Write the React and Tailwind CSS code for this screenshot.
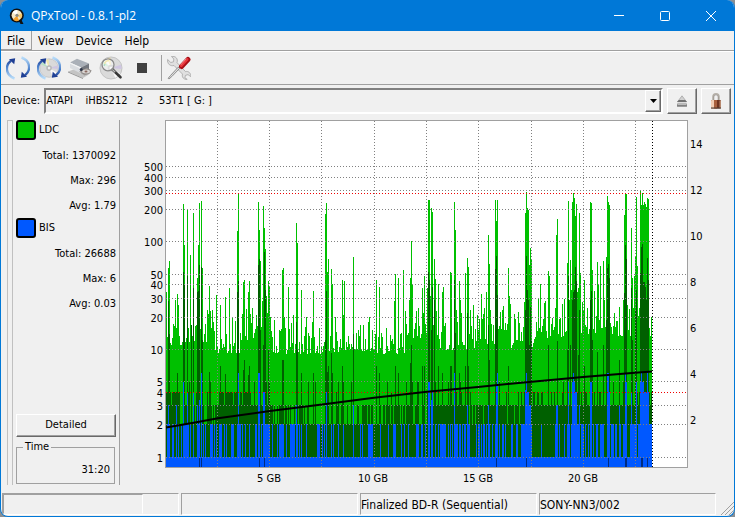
import React, { useState } from "react";

const UI_FONT = "font-['DejaVu_Sans_Condensed','Noto_Sans',sans-serif]";

// Chart geometry, in view box units
const LEFT = 166;
const RIGHT = 687;
const TOP = 121;
const BOTTOM = 467;
const DATA_END = 652;

const errorTicks = [
  [500, 166],
  [400, 177],
  [300, 190],
  [200, 209],
  [100, 241],
  [50, 274],
  [40, 284],
  [30, 298],
  [20, 317],
  [10, 349],
  [5, 381],
  [4, 392],
  [3, 405],
  [2, 424],
  [1, 457],
];

const speedTicks = [
  [14, 144],
  [12, 190],
  [10, 236],
  [8, 282],
  [6, 328],
  [4, 374],
  [2, 420],
];

const sizeTicks = [
  ["5 GB", 269],
  ["10 GB", 373],
  ["15 GB", 478],
  ["20 GB", 583],
];

const sizeGrid = [217, 269, 321, 374, 426, 478, 531, 583, 635];

// Peaks, keyed by column
const ldcPeaks = {
  166: 292, 167: 337, 168: 268, 169: 261, 175: 300, 177: 294, 178: 305,
  183: 204, 184: 245, 187: 210, 190: 255, 193: 213, 197: 278, 198: 245,
  199: 203, 201: 201, 202: 268, 208: 314, 209: 286, 212: 310, 216: 295,
  220: 305, 225: 297, 229: 288, 232: 318, 237: 231, 238: 193, 243: 282,
  244: 280, 248: 292, 249: 281, 252: 308, 258: 202, 259: 230, 260: 261,
  263: 206, 264: 228, 265: 249, 266: 296, 267: 313, 268: 281, 269: 286,
  270: 317, 282: 270, 283: 268, 284: 317, 288: 287, 293: 315, 296: 223,
  297: 243, 301: 290, 306: 317, 312: 322, 313: 291, 325: 214, 326: 203,
  327: 272, 328: 259, 331: 269, 332: 284, 335: 317, 342: 280, 343: 315,
  344: 281, 353: 257, 360: 325, 368: 322, 369: 317, 376: 280, 379: 287,
  386: 328, 395: 274, 394: 301, 398: 278, 403: 270, 409: 300, 410: 278,
  411: 241, 412: 284, 418: 308, 422: 288, 424: 276, 427: 288, 428: 200,
  429: 200, 430: 296, 431: 208, 432: 212, 434: 259, 435: 279, 438: 284,
  442: 292, 443: 287, 450: 272, 451: 273, 454: 202, 455: 230, 459: 281,
  460: 300, 465: 273, 467: 258, 468: 267, 473: 305, 481: 294, 486: 292,
  488: 235, 489: 264, 490: 310, 495: 200, 496: 221, 497: 200, 500: 312,
  502: 310, 508: 268, 509: 296, 510: 304, 514: 314, 518: 312, 524: 302,
  525: 213, 526: 192, 527: 208, 528: 210, 529: 265, 530: 248, 531: 259,
  540: 284, 544: 303, 545: 301, 548: 271, 549: 276, 552: 318, 556: 235,
  557: 219, 567: 263, 568: 201, 569: 300, 570: 260, 571: 290, 572: 202,
  573: 193, 574: 198, 575: 216, 576: 204, 577: 292, 578: 288, 579: 213,
  580: 273, 584: 280, 587: 308, 590: 202, 591: 203, 592: 270, 594: 291,
  597: 262, 598: 284, 600: 266, 603: 261, 604: 300, 606: 257, 607: 196,
  608: 202, 609: 205, 619: 307, 624: 215, 625: 193, 626: 194, 631: 228,
  632: 278, 634: 276, 635: 256, 636: 197, 637: 266, 640: 190, 641: 205,
  642: 193, 643: 205, 644: 202, 645: 204, 646: 207, 647: 198, 648: 199,
};

const ldcAverages = {
  168: 301, 169: 334, 177: 373, 183: 272, 184: 285, 187: 276, 191: 325,
  193: 288, 197: 292, 198: 291, 199: 265, 201: 267, 202: 340, 209: 372,
  220: 366, 225: 374, 237: 292, 238: 281, 243: 370, 244: 360, 248: 375,
  249: 366, 258: 265, 259: 259, 260: 330, 263: 345, 264: 252, 265: 290,
  268: 349, 282: 360, 283: 360, 296: 322, 297: 350, 301: 373, 313: 373,
  325: 340, 326: 291, 327: 372, 328: 366, 331: 353, 332: 373, 342: 366,
  353: 334, 376: 366, 379: 373, 395: 366, 398: 373, 410: 363, 411: 345,
  412: 381, 422: 366, 424: 366, 428: 272, 429: 280, 431: 330, 432: 287,
  434: 300, 438: 366, 442: 373, 450: 366, 451: 366, 454: 280, 455: 333,
  459: 373, 465: 366, 467: 313, 468: 366, 488: 325, 489: 360, 495: 269,
  496: 256, 497: 295, 508: 366, 525: 310, 526: 256, 527: 290, 528: 300,
  529: 345, 530: 307, 531: 340, 548: 345, 557: 341, 567: 350, 568: 276,
  570: 345, 572: 300, 573: 292, 574: 290, 575: 267, 576: 281, 578: 355,
  579: 310, 584: 366, 590: 300, 591: 291, 592: 340, 597: 352, 603: 345,
  606: 320, 607: 268, 608: 264, 609: 278, 619: 360, 624: 293, 625: 245,
  626: 259, 631: 288, 632: 340, 635: 310, 636: 290, 640: 273, 641: 247,
  642: 244, 643: 282, 644: 282, 645: 287, 646: 300, 647: 258, 648: 280,
};

const bisPeaks = {
  168: 405, 176: 405, 183: 382, 187: 392, 193: 392, 197: 405, 199: 400,
  201: 373, 238: 373, 258: 373, 259: 373, 263: 392, 264: 392, 296: 405,
  326: 392, 353: 405, 428: 382, 429: 382, 431: 400, 432: 392, 454: 373,
  467: 405, 488: 405, 496: 385, 497: 373, 525: 390, 526: 373, 527: 392,
  528: 392, 529: 405, 530: 405, 556: 405, 557: 405, 568: 382, 572: 382,
  573: 373, 574: 382, 575: 392, 576: 392, 579: 405, 590: 382, 591: 382,
  607: 373, 608: 373, 609: 392, 619: 405, 625: 373, 626: 382, 631: 392,
  636: 382, 640: 382, 641: 373, 642: 382, 643: 382, 644: 392, 645: 392,
  646: 392, 647: 373, 648: 392,
};

const bisAverages = [199, 201, 259, 264, 496, 526, 608, 625, 626, 641, 642, 647];

// start column, quiet level, swing
const ldcFloor = [
  [166, 345, 38],
  [182, 342, 40],
  [211, 353, 42],
  [240, 340, 40],
  [272, 354, 34],
  [298, 354, 28],
  [340, 351, 28],
  [372, 354, 26],
  [405, 338, 28],
  [438, 350, 44],
  [475, 344, 36],
  [496, 330, 28],
  [508, 348, 32],
  [535, 338, 40],
  [575, 334, 34],
  [612, 336, 36],
  [649, 336, 20],
];

// start column, share of columns at 3, share of columns at 4
const ldcAverageFloor = [
  [166, 1, 0.95],
  [179, 0.6, 0.15],
  [219, 1, 0.95],
  [251, 1, 0.1],
  [272, 0.45, 0.08],
  [340, 0.5, 0],
  [380, 0.6, 0.1],
  [427, 0.85, 0.15],
  [520, 0.95, 0.4],
  [536, 1, 0.2],
  [570, 1, 0.5],
  [600, 1, 0.3],
  [636, 1, 0.9],
];

// start column, share of columns at 2
const bisFloor = [
  [166, 0.45],
  [258, 0.7],
  [270, 0.3],
  [428, 0.5],
  [521, 1],
  [532, 0.3],
  [567, 0.9],
  [585, 0.45],
  [606, 0.6],
  [639, 1],
];

const noise = (n) => {
  const s = Math.sin(n * 12.9898 + 4.1414) * 43758.5453;
  return s - Math.floor(s);
};

const pick = (table, x) => table.filter((row) => row[0] <= x).pop();

const columns = Array.from({ length: DATA_END - LEFT }, (_, i) => LEFT + i);

const ldcTop = (x) => {
  if (ldcPeaks[x]) return ldcPeaks[x];
  const [, level, swing] = pick(ldcFloor, x);
  return Math.round(level - swing * noise(x) ** 2);
};

const ldcAverageTop = (x) => {
  if (ldcAverages[x]) return ldcAverages[x];
  const [, three, four] = pick(ldcAverageFloor, x);
  const n = noise(x + 700);
  if (n < 0.06) return 382;
  if (n < four) return 392;
  if (n < three) return 405;
  return 424;
};

const bisTop = (x) => {
  if (bisPeaks[x]) return bisPeaks[x];
  return noise(x + 1900) < pick(bisFloor, x)[1] ? 424 : 457;
};

const bars = (top) =>
  columns.map((x) => `M${x} ${BOTTOM}V${top(x)}h1V${BOTTOM}z`).join("");

const ErrorChart = () => (
  <svg
    viewBox="120 114 614 375"
    className="block h-auto w-full"
    role="img"
    aria-label="LDC and BIS errors"
  >
    <rect x={LEFT - 1} y={TOP - 1} width={RIGHT - LEFT + 2} height={BOTTOM - TOP + 2} fill="#a0a0a0" />
    <rect x={LEFT} y={TOP} width={RIGHT - LEFT} height={BOTTOM - TOP} fill="#fff" />

    <g shapeRendering="crispEdges">
      <path d={bars(ldcTop)} fill="#00c000" />
      <path d={bars(ldcAverageTop)} fill="#006000" />
      <path d={bars(bisTop)} fill="#0058ff" />
      {bisAverages.map((x) => (
        <rect key={x} x={x} y="458" width="1" height="9" fill="#002c80" />
      ))}
    </g>

    {/* Grid */}
    <g strokeDasharray="1 2" fill="none" shapeRendering="crispEdges">
      {sizeGrid.map((x) => (
        <path key={x} d={`M${x + 0.5} ${TOP}V${BOTTOM}`} stroke="#808080" />
      ))}
      {errorTicks.map(([value, y]) => (
        <path
          key={value}
          d={`M${LEFT} ${y + 0.5}H${RIGHT}`}
          stroke={value === 4 ? "#f00000" : "#808080"}
        />
      ))}
      <path d={`M${LEFT} 193.5H${RIGHT}`} stroke="#f00000" />
      <path d={`M${DATA_END + 0.5} ${TOP}V${BOTTOM}`} stroke="#000" />
    </g>

    {/* Read speed */}
    <path
      d="M166 427.5L195 422.5L218 418.3L270 411L322 404.5L374 397.8L427 391.8L478 387L532 381.7L583 377L635 372.8L652 371.5"
      fill="none"
      stroke="#000"
      strokeWidth="2"
    />

    <g fontSize="11" fill="#000">
      {errorTicks.map(([value, y]) => (
        <text key={value} x="163" y={y + 5} textAnchor="end">
          {value}
        </text>
      ))}
      {speedTicks.map(([value, y]) => (
        <text key={value} x="690" y={y + 4}>
          {value}
        </text>
      ))}
      {sizeTicks.map(([label, x]) => (
        <text key={label} x={x} y="482" textAnchor="middle">
          {label}
        </text>
      ))}
    </g>
  </svg>
);

const Disc = () => (
  <>
    <circle cx="12" cy="12" r="10.500" fill="#dadada" stroke="#bdbdbd" strokeWidth=".8" />
    <path d="M12 12L4.500 5.500a10 10 0 0 1 5-3.200z" fill="#f6f6f6" />
    <path d="M12 12L8.500 3a10 10 0 0 1 3-1z" fill="#f3e6a8" />
    <path d="M12 12L3 8a10 10 0 0 1 2-3z" fill="#b9e2c4" />
    <path d="M12 12l8.500 5a10 10 0 0 1-4.500 4.200z" fill="#f8f8f8" />
    <path d="M12 12l9.500-3a10 10 0 0 1 .5 4z" fill="#cfc6e2" />
    <circle cx="12" cy="12" r="3.200" fill="#b8b8b8" />
    <circle cx="12" cy="12" r="1.500" fill="#f0f0f0" />
  </>
);

const Arrows = ({ id }) => (
  <>
    <defs>
      <linearGradient id={id} gradientUnits="userSpaceOnUse" x1="0" y1="3" x2="0" y2="22">
        <stop offset="0" stopColor="#1f3f94" />
        <stop offset=".4" stopColor="#4a7fcb" />
        <stop offset="1" stopColor="#b5daf8" />
      </linearGradient>
    </defs>
    {[0, 180].map((angle) => (
      <g key={angle} transform={`rotate(${angle} 12 12)`}>
        <path
          d="M8.500 22.500C-.5 19.500-1.200 9.500 5 4.800"
          fill="none"
          stroke={`url(#${id})`}
          strokeWidth="2.400"
        />
        <path d="M3 3.200L9.200 2.200L8.200 8.300z" fill="#1f3f94" />
      </g>
    ))}
  </>
);

const RefreshIcon = () => (
  <svg viewBox="0 0 24 24" className="size-6">
    <Arrows id="refresh" />
  </svg>
);

const RescanIcon = () => (
  <svg viewBox="0 0 24 24" className="size-6">
    <g transform="translate(1.500 1.500) scale(.88)">
      <Disc />
    </g>
    <Arrows id="rescan" />
  </svg>
);

const DriveIcon = () => (
  <svg viewBox="0 0 24 24" className="size-6">
    <path d="M0 15.500l7-2.500l14 5.500l-6 3.500z" fill="#c4c4c4" />
    <path d="M0 15.500l15 6.500v1L0 16.500z" fill="#969696" />
    <path d="M2 6.500L9 2.800l12 4.700l-8 4z" fill="#aab0b8" />
    <path d="M2 6.500l11 5v6L2 12z" fill="#d9dce0" />
    <path d="M2 6.500l11 5v1.200L2 7.700z" fill="#f3f4f5" />
    <path d="M13 11.500l8-4v5.500l-8 4.500z" fill="#73777f" />
    <path d="M11 15.500l8-3.500l5 2.800l-7.500 5z" fill="#aaa6a4" />
    <ellipse cx="18" cy="15.500" rx="4.400" ry="2.500" fill="#d8d4d2" stroke="#77716f" strokeWidth=".8" />
    <ellipse cx="18" cy="15.500" rx="1.500" ry=".9" fill="#8b6a62" />
    <circle cx="13.200" cy="13.600" r="1.500" fill="#30384a" />
  </svg>
);

const ScanIcon = () => (
  <svg viewBox="0 0 24 24" className="size-6">
    <g transform="translate(-.6 -.6) scale(1.050)">
      <Disc />
    </g>
    <path d="M13.500 13.500l8 7.800" stroke="#383838" strokeWidth="2.600" strokeLinecap="round" />
    <path d="M13.200 13.200l3 3" stroke="#b5b5b5" strokeWidth="1.400" />
    <circle cx="9" cy="8.800" r="6" fill="#fff" fillOpacity=".5" stroke="#8a8a8a" strokeWidth="1.300" />
    <path d="M5.500 8q1-3.500 4.500-3.500" fill="none" stroke="#f2e9b4" strokeWidth="1.600" />
    <path d="M5 10q.5-1 1-2" fill="none" stroke="#a8dcc0" strokeWidth="1.300" />
  </svg>
);

const StopIcon = () => (
  <svg viewBox="0 0 24 24" className="size-6">
    <rect x="7" y="7" width="10" height="10" fill="#404040" />
  </svg>
);

const ToolsIcon = () => (
  <svg viewBox="0 0 24 24" className="size-6">
    <path d="M.6 3.500L3.800 6.500L6.500 5.800L6.800 3L4.500.5C8.500-.4 11.400 3 10 6.600L18.500 15.600c3-.8 5.700 1.700 5.200 5L21 18.600l-2.600.8l-.5 2.500l2.300 1.400c-3.400.6-5.700-2.300-4.700-5.200L7 9.500C3.500 10.500.1 8 .6 3.500z" fill="#e0e0e0" stroke="#a5a5a5" strokeWidth=".8" />
    <path d="M12.500 12.500L4.800 20.500L2 23L1.200 22.300L3.500 19.500L11.200 11.200z" fill="#dedede" stroke="#777" strokeWidth=".8" />
    <path d="M14.500 10.500l6.500-7" stroke="#a80f16" strokeWidth="5" strokeLinecap="round" />
    <path d="M14.200 9.800l6-6.500" stroke="#e8343a" strokeWidth="2.600" strokeLinecap="round" />
    <path d="M13.800 8.800l5.200-5.800" stroke="#f58f92" strokeWidth=".9" strokeLinecap="round" />
  </svg>
);

const EjectIcon = () => (
  <svg viewBox="0 0 16 16" className="size-4">
    <path d="M8 2.800L12.500 8.800h-9z" fill="#d0d0d0" stroke="#a5a5a5" strokeWidth=".8" />
    <path d="M4.800 7h6.400l1.800 2H3z" fill="#707070" />
    <rect x="3" y="10.500" width="10" height="3.300" rx=".6" fill="#808080" />
    <path d="M3.500 11.500h9" stroke="#bbb" />
  </svg>
);

const LockIcon = () => (
  <svg viewBox="0 0 16 16" className="size-4">
    <path d="M5 7.500V3.800a3 3 0 0 1 6 0v3.700" fill="none" stroke="#b5b0a8" strokeWidth="1.600" />
    <path d="M5.800 7.500V4a2.200 2.200 0 0 1 4.400 0v3.500" fill="none" stroke="#7d766e" strokeWidth=".6" />
    <rect x="3" y="7" width="10" height="8.500" rx="1" fill="#6f3420" />
    <rect x="3" y="7" width="4.500" height="8.500" rx="1" fill="#f0cdb4" />
    <rect x="6" y="7" width="3" height="8.500" fill="#a8613f" />
    <rect x="11.500" y="7.500" width="1.500" height="7.500" fill="#b98a70" />
    <path d="M3 15h10" stroke="#4a3a32" strokeWidth="1" />
  </svg>
);

const AppIcon = () => (
  <svg viewBox="0 0 16 16" className="size-4">
    <circle cx="7.800" cy="7.500" r="7" fill="#111" />
    <path d="M9 11l2.500 5h3l-2.500-5z" fill="#111" />
    <circle cx="7.800" cy="7.300" r="5.200" fill="#f5e7c4" />
    <path d="M8 7.500L3.500 4.500a5 5 0 0 1 5-2.300z" fill="#fff" />
    <path d="M8 7.500l2 5a5 5 0 0 1-6-1z" fill="#f2a02c" />
    <path d="M8 7.500l5-2a5 5 0 0 1-1 5z" fill="#f8c96a" />
    <circle cx="8" cy="7.300" r="1.600" fill="#8d8a80" />
  </svg>
);

const RAISED =
  "border border-t-white border-l-white border-r-[#696969] border-b-[#696969] shadow-[inset_-1px_-1px_0_#a0a0a0]";

const TitleBar = () => (
  <header className="flex h-[31px] shrink-0 items-center bg-[#0078d7] pl-2 text-white">
    <AppIcon />
    <h1 className="ml-1.5 flex-1 font-['Open_Sans',sans-serif] text-[12px]">
      QPxTool - 0.8.1-pl2
    </h1>
    <button aria-label="Minimize" className="flex h-full w-[46px] items-center justify-center">
      <svg viewBox="0 0 12 12" className="size-3" stroke="#fff" fill="none">
        <path d="M1 5.500h10" />
      </svg>
    </button>
    <button aria-label="Maximize" className="flex h-full w-[46px] items-center justify-center">
      <svg viewBox="0 0 12 12" className="size-3" stroke="#fff" fill="none">
        <rect x="1.500" y="1.500" width="9" height="9" rx="1" />
      </svg>
    </button>
    <button aria-label="Close" className="flex h-full w-[46px] items-center justify-center">
      <svg viewBox="0 0 12 12" className="size-3" stroke="#fff" fill="none">
        <path d="M1 1l10 10M11 1L1 11" />
      </svg>
    </button>
  </header>
);

const MenuBar = () => (
  <nav className="flex h-5 shrink-0 border-b border-[#a0a0a0] text-[12px] leading-5">
    {["File", "View", "Device", "Help"].map((item, i) => (
      <button
        key={item}
        className={
          i === 0
            ? "border-r border-b border-[#a0a0a0] px-1.5"
            : "px-1.5"
        }
      >
        {item}
      </button>
    ))}
  </nav>
);

const tools = [
  ["Refresh devices", RefreshIcon],
  ["Rescan media", RescanIcon],
  ["Drive info", DriveIcon],
  ["Scan", ScanIcon],
  ["Stop", StopIcon],
];

const Toolbar = () => (
  <div className="flex h-[34px] shrink-0 items-center border-t border-b border-t-white border-b-[#a0a0a0] pl-px">
    {tools.map(([label, Icon]) => (
      <button key={label} aria-label={label} className="flex h-8 w-[31px] items-center justify-center">
        <Icon />
      </button>
    ))}
    <div className="ml-1 h-[26px] border-l border-[#a0a0a0]" />
    <button aria-label="Preferences" className="ml-px flex h-8 w-[31px] items-center justify-center">
      <ToolsIcon />
    </button>
  </div>
);

const DeviceRow = () => (
  <div className="flex shrink-0 items-center gap-1 pt-[3px] pr-[3px] pl-0.5 text-[11px]">
    <label htmlFor="device">Device:</label>
    <div className="relative flex flex-1">
      <select
        id="device"
        className="h-[26px] w-full appearance-none border-2 border-t-[#808080] border-r-white border-b-white border-l-[#808080] bg-[#f0f0f0] text-[11px]"
      >
        <option>
          {"ATAPI\u00a0\u00a0\u00a0\u00a0iHBS212\u00a0\u00a0\u00a02\u00a0\u00a0\u00a0\u00a0\u00a053T1 [ G: ]"}
        </option>
      </select>
      <span className={`pointer-events-none absolute top-0.5 right-0.5 flex h-[22px] w-4 items-center justify-center bg-[#f0f0f0] ${RAISED}`}>
        <svg viewBox="0 0 7 4" className="h-1 w-[7px]">
          <path d="M0 0h7L3.500 4z" />
        </svg>
      </span>
    </div>
    <button aria-label="Eject" className={`flex h-[26px] w-[30px] items-center justify-center ${RAISED}`}>
      <EjectIcon />
    </button>
    <button aria-label="Lock" className={`flex h-[26px] w-[30px] items-center justify-center ${RAISED}`}>
      <LockIcon />
    </button>
  </div>
);

const stats = [
  { name: "LDC", color: "bg-[#00c000]", total: "1370092", max: "296", avg: "1.79" },
  { name: "BIS", color: "bg-[#0058ff]", total: "26688", max: "6", avg: "0.03" },
];

const SidePanel = ({ onDetailed }) => (
  <aside className="flex w-[113px] shrink-0 gap-[3px] text-[11px] border-r border-[#a0a0a0]">
    <div className="w-[6px] border border-b-0 border-[#c0c0c0]" />
    <div className="flex flex-1 flex-col pr-[3px]">
      {stats.map((s) => (
        <section key={s.name} className="h-[98px]">
          <h2 className="flex h-5 items-center gap-[3px]">
            <span className={`size-5 rounded-[3px] border-2 border-black ${s.color}`} />
            {s.name}
          </h2>
          <div className="pt-[3px] text-right leading-[25px]">
            <p>Total: {s.total}</p>
            <p>Max: {s.max}</p>
            <p>Avg: {s.avg}</p>
          </div>
        </section>
      ))}
      <button onClick={onDetailed} className={`mt-auto h-[23px] shrink-0 ${RAISED}`}>
        Detailed
      </button>
      <fieldset className="mt-[3px] mr-px mb-px border border-[#a0a0a0] px-1 pb-1 text-right">
        <legend className="ml-0.5 px-0.5 text-left leading-[14px]">Time</legend>
        <p className="pt-1.5 leading-[19px]">31:20</p>
      </fieldset>
    </div>
  </aside>
);

const CELL = "h-[22px] border border-t-[#a0a0a0] border-l-[#a0a0a0] border-r-white border-b-white";

const StatusBar = () => (
  <footer className="flex shrink-0 items-center gap-0.5 pt-1 pb-px pl-px text-[12px] leading-[22px]">
    <div className={`flex-1 ${CELL}`}>
      <div className="h-5 w-4/5 border border-t-[#a0a0a0] border-l-[#a0a0a0] border-r-white border-b-transparent" />
    </div>
    <div className={`flex-1 ${CELL}`} />
    <div className={`flex-1 overflow-hidden whitespace-nowrap ${CELL}`}>Finalized BD-R (Sequential)</div>
    <div className={`flex-1 ${CELL}`}>SONY-NN3/002</div>
    <svg viewBox="0 0 16 14" className="h-3.5 w-4 self-end" stroke="#a0a0a0" fill="none">
      <path d="M3 14L16 1M7 14l9-9M11 14l5-5" />
    </svg>
  </footer>
);

const App = () => {
  const [, setDetailed] = useState(false);

  return (
    <div className="min-h-screen bg-[#8a8f94]">
      <div className={`flex min-h-screen flex-col overflow-hidden rounded-lg border-x border-b border-[#0078d7] bg-[#f0f0f0] text-black ${UI_FONT}`}>
        <TitleBar />
        <MenuBar />
        <Toolbar />
        <DeviceRow />
        <main className="flex flex-1 pl-1.5">
          <div className="flex pt-1.5 pb-1">
            <SidePanel onDetailed={() => setDetailed((open) => !open)} />
          </div>
          <div className="min-w-0 flex-1">
            <ErrorChart />
          </div>
        </main>
        <StatusBar />
      </div>
    </div>
  );
};

export default App;
